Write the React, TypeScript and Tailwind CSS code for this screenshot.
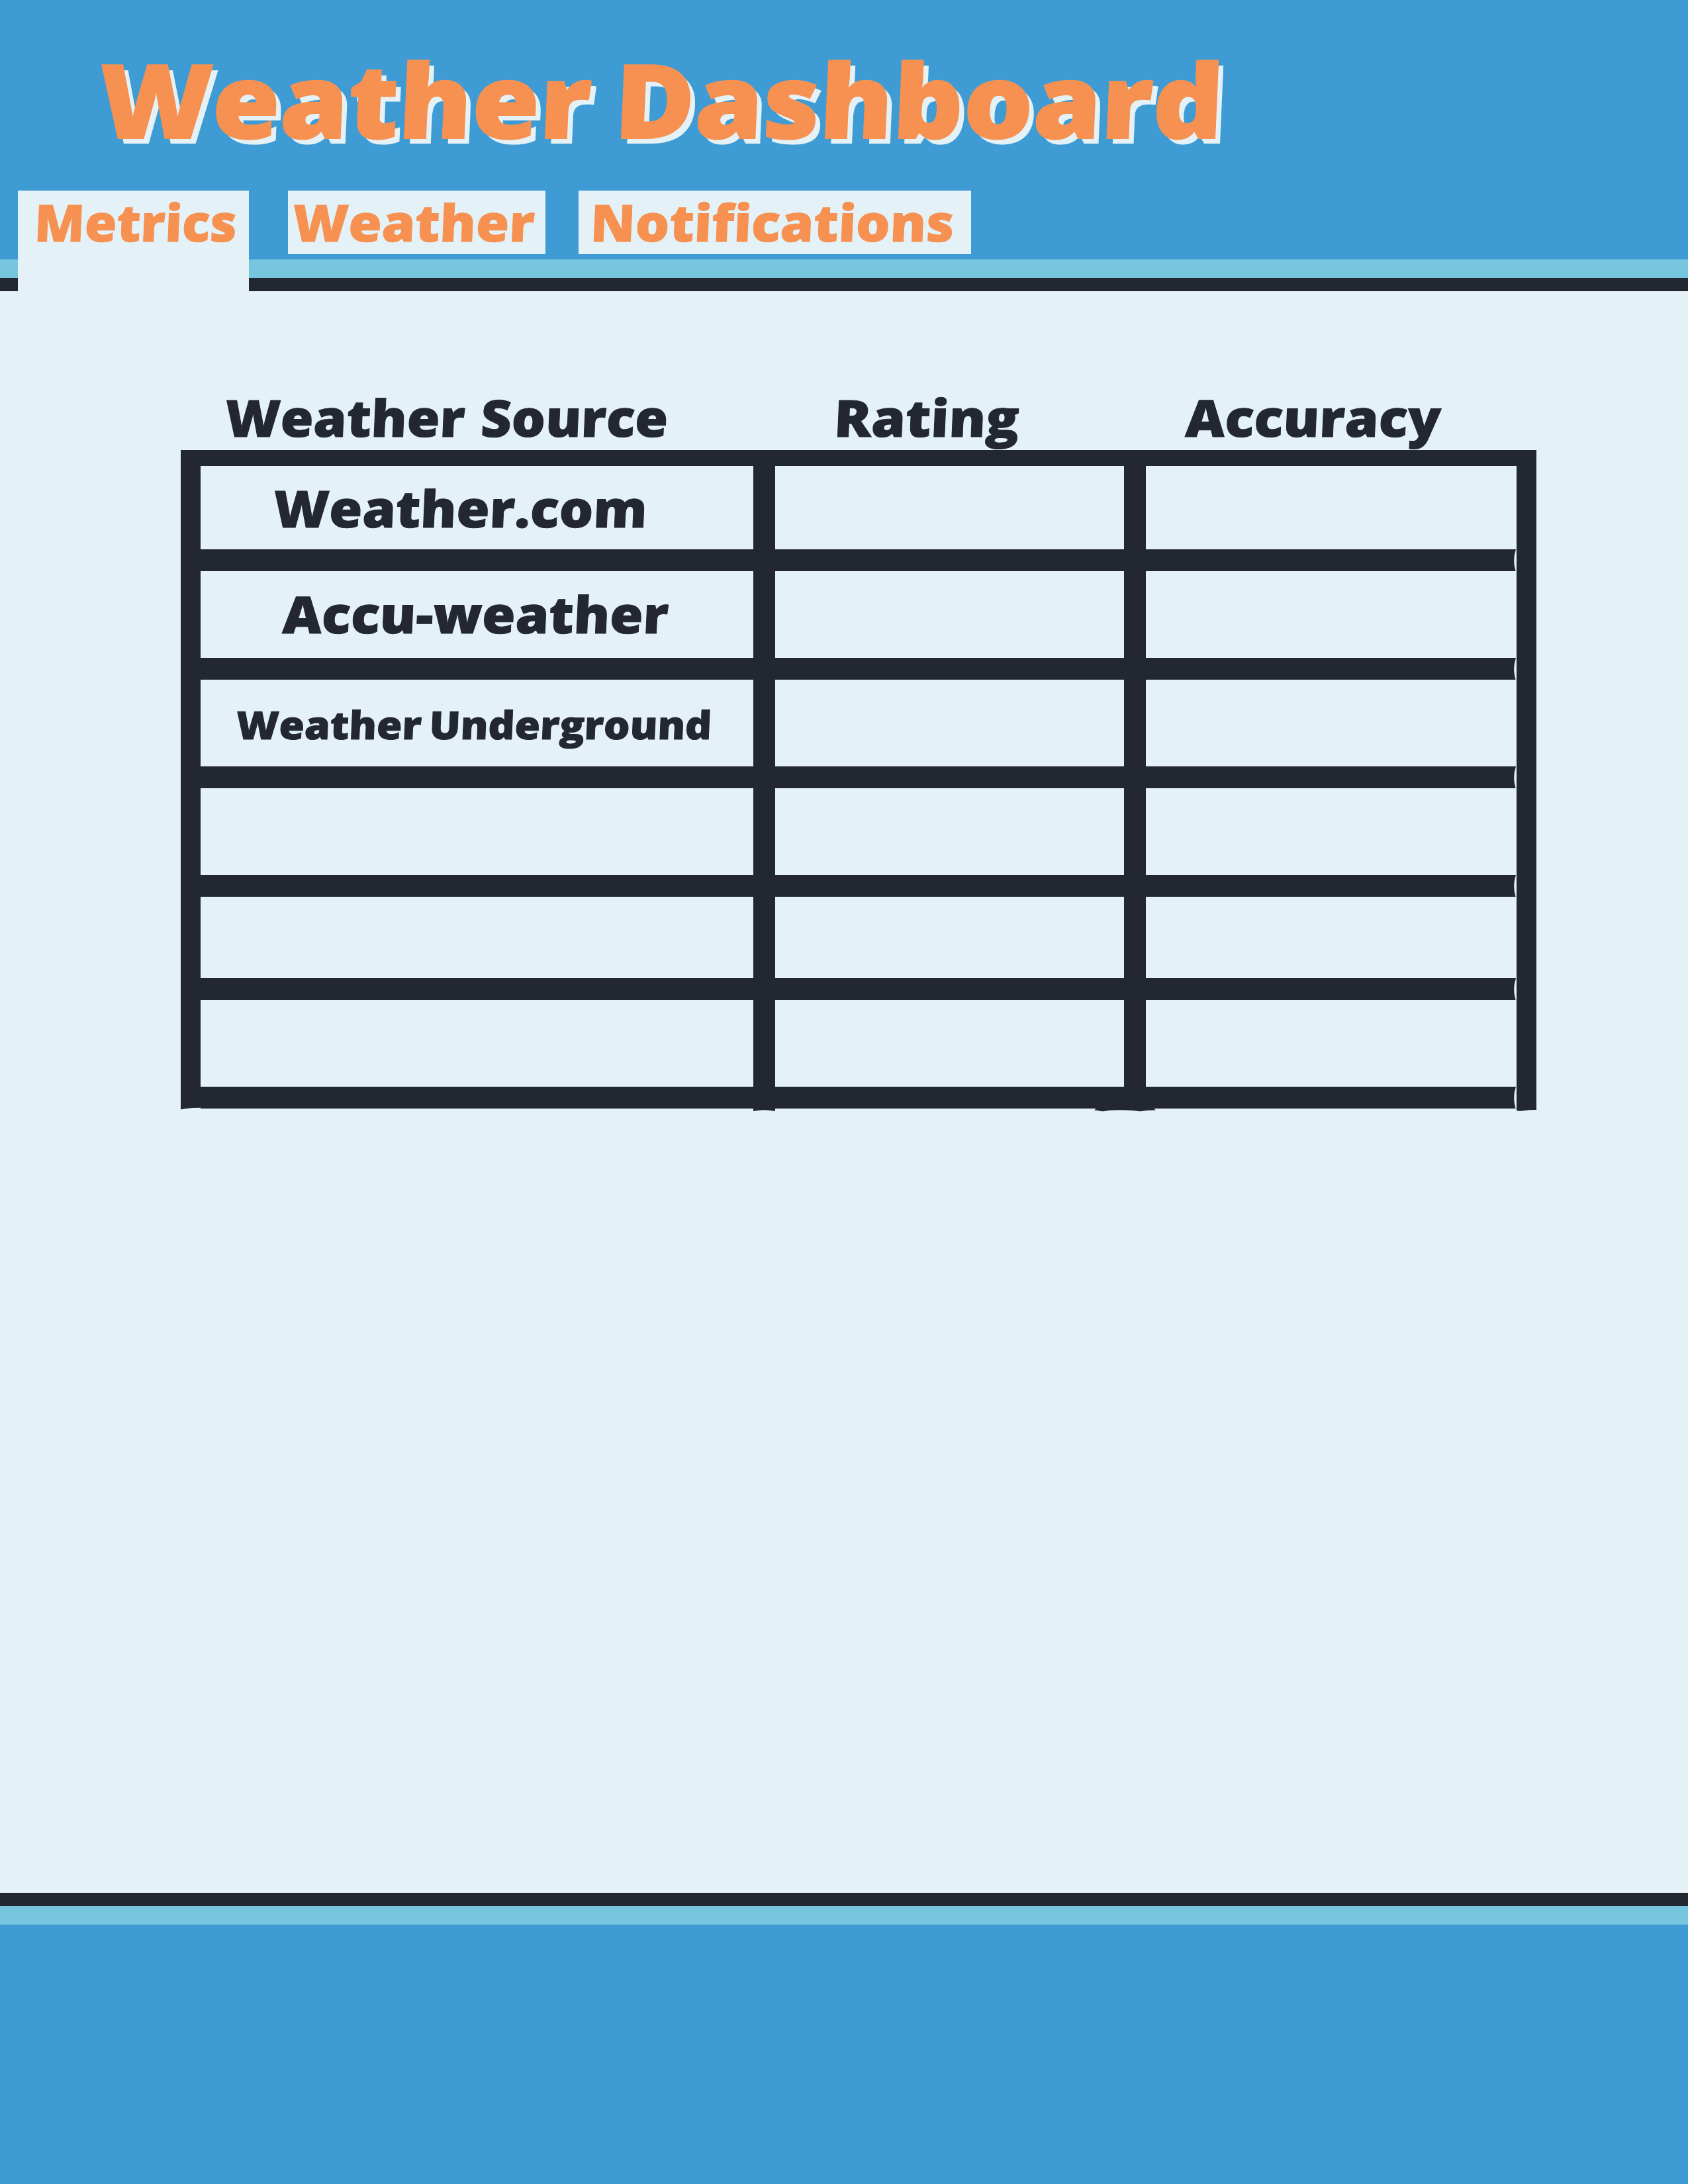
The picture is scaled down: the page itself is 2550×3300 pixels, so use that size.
import React from 'react';

const word =
  'block w-max origin-[0_88.8%] whitespace-nowrap font-extrabold leading-none';

const tabs = [
  { label: 'Metrics', box: 'ml-[27px] h-[152px] w-[349px] pl-[23.5px]', fit: '[transform:skewX(-2.5deg)_scaleX(1.02)]' },
  { label: 'Weather', box: 'ml-[59px] h-24 w-[389px] pl-1.5', fit: '[transform:skewX(-2.5deg)_scaleX(1.055)]' },
  { label: 'Notifications', box: 'ml-[50px] h-24 w-[593px] pl-[17px]', fit: '[transform:skewX(-2.5deg)_scaleX(1.054)]' },
];

const headings = [
  { label: 'Weather Source', box: 'pl-9', fit: '[word-spacing:3px] [transform:skewX(-2.5deg)_scaleX(1.046)]' },
  { label: 'Rating', box: 'pl-[88px]', fit: '[transform:skewX(-2.5deg)_scaleX(1.08)]' },
  { label: 'Accuracy', box: 'pl-[59px]', fit: '[transform:skewX(-2.5deg)_scaleX(1.062)]' },
];

const rows = [
  { label: 'Weather.com', box: 'pl-[109px] pt-[25px] text-[77px]', fit: '[transform:skewX(-2.5deg)_scaleX(1.053)]' },
  { label: 'Accu-weather', box: 'pl-[123px] pt-[26px] text-[77px]', fit: '[transform:skewX(-2.5deg)_scaleX(1.057)]' },
  { label: 'Weather Underground', box: 'pl-[53px] pt-[38px] text-[58.5px]', fit: '[word-spacing:-4px] [transform:skewX(-2.5deg)_scaleX(1.064)]' },
  { label: '', box: '', fit: '' },
  { label: '', box: '', fit: '' },
  { label: '', box: '', fit: '' },
];

function Header() {
  return (
    <header className="h-[440px] bg-[#3f9bd4] text-[#f69151]">
      <h1 className="h-[288px] pl-[147px] pt-[71px] text-[155px]">
        <span className={`${word} [-webkit-text-stroke:2px_#f69151] [word-spacing:-7px] [text-shadow:8px_8px_0_#e4f2f7] [transform:skewX(-2.5deg)_scaleX(1.067)]`}>
          Weather Dashboard
        </span>
      </h1>
      <nav className="relative z-10 flex h-[152px] items-start text-[77px] [-webkit-text-stroke:1px_#f69151]">
        {tabs.map((t) => (
          <a key={t.label} className={`bg-[#e4f2f7] pt-[9px] ${t.box}`}>
            <span className={`${word} ${t.fit}`}>{t.label}</span>
          </a>
        ))}
      </nav>
      <div className="-mt-12 h-7 bg-[#76c6e0]" />
      <div className="h-5 bg-[#222732]" />
    </header>
  );
}

/* Concave end of a horizontal rule */
function Notch() {
  return (
    <svg className="absolute right-0 top-full h-[33px] w-[6px]" viewBox="0 0 6 33">
      <path d="M5 0Q-.5 16.5 4.6 33H6V0Z" fill="#e4f2f7" />
    </svg>
  );
}

/* Uneven lower ends of the vertical rules */
function RaggedEdge() {
  return (
    <svg className="absolute left-0 top-[992px] h-[10px] w-[2048px]" viewBox="0 0 2048 10">
      <path d="M0 4.500Q12 1.400 30 1.400V3H0Z" fill="#e4f2f7" />
      <path d="M0 0H30V1.400Q12 1.400 0 4.500Z" fill="#222732" />
      <path d="M865 2H898V7Q881 3.500 865 7Z" fill="#222732" />
      <path d="M1384 2H1469L1473 5.500Q1463 5 1455 6.500Q1448 8 1440 6Q1420 4.500 1402 5.800Q1393 8.500 1386 6L1380 5.500Z" fill="#222732" />
      <path d="M2018 0H2048V5Q2037 4.800 2029 6.300Q2022 7.400 2018 6Z" fill="#222732" />
    </svg>
  );
}

export default function App() {
  return (
    <div className="flex h-[3300px] w-[2550px] flex-col overflow-hidden bg-[#e4f2f7] [font-family:'Open_Sans',sans-serif]">
      <Header />
      <main className="h-[2420px] pt-[152px] text-[#222732] [-webkit-text-stroke:1px_#222732]">
        <div className="ml-[303px] grid h-[88px] grid-cols-[835px_527px_560px] gap-x-[33px] text-[77px]">
          {headings.map((h) => (
            <div key={h.label} className={h.box}>
              <span className={`${word} ${h.fit}`}>{h.label}</span>
            </div>
          ))}
        </div>
        <div className="relative ml-[273px] grid h-[995px] w-[2048px] grid-cols-[835px_527px_560px] grid-rows-[126px_131px_131px_131px_123px_131px] gap-[33px] bg-[#222732] px-[30px] pt-6">
          {rows.map((r, i) => (
            <React.Fragment key={i}>
              <div className={`bg-[#e4f2f7] ${r.box}`}>
                {r.label && <span className={`${word} ${r.fit}`}>{r.label}</span>}
              </div>
              <div className="bg-[#e4f2f7]" />
              <div className="relative bg-[#e4f2f7]">
                <Notch />
              </div>
            </React.Fragment>
          ))}
          <RaggedEdge />
        </div>
      </main>
      <footer className="flex-1 bg-[#3f9bd4]">
        <div className="h-5 bg-[#222732]" />
        <div className="h-7 bg-[#76c6e0]" />
      </footer>
    </div>
  );
}
